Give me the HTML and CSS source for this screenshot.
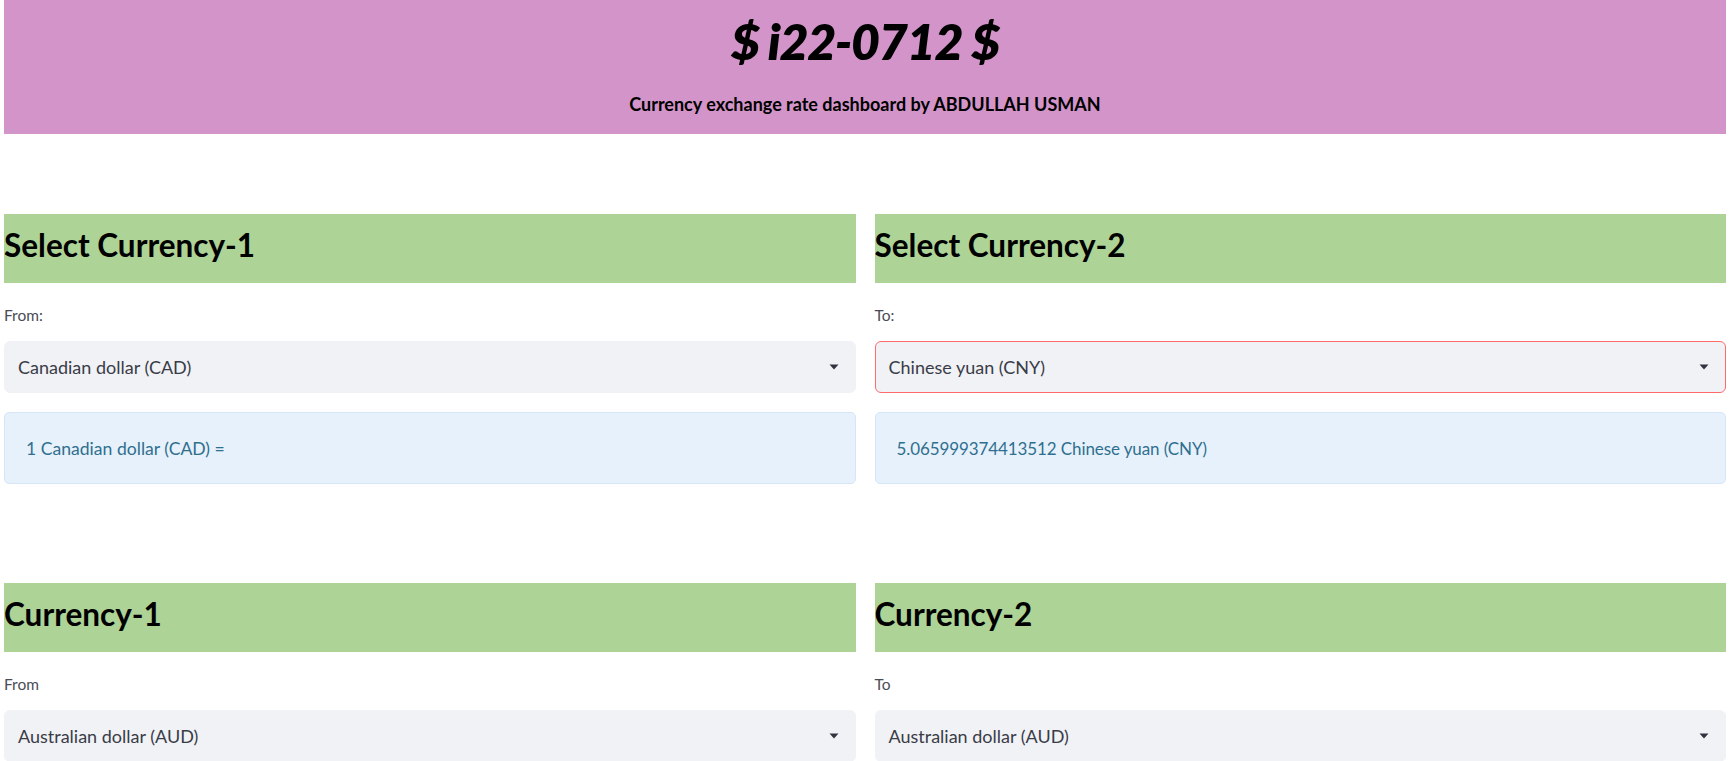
FILE: index.html
```html
<!DOCTYPE html>
<html lang="en">
<head>
<meta charset="utf-8">
<title>Currency exchange rate dashboard</title>
<link rel="stylesheet" href="styles.css">
</head>
<body>
<div class="page">
  <header class="banner">
    <h1 class="title">$ i22-0712 $</h1>
    <p class="subtitle">Currency exchange rate dashboard by ABDULLAH USMAN</p>
  </header>

  <section class="row">
    <div class="col">
      <h2 class="section-head">Select Currency-1</h2>
      <div class="label">From:</div>
      <div class="select">
        <span class="select-value">Canadian dollar (CAD)</span>
        <svg class="caret" width="10" height="6" viewBox="0 0 10 6"><polygon points="0.5,0.5 9.5,0.5 5,5.5" fill="#31333f"/></svg>
      </div>
      <div class="info">1 Canadian dollar (CAD) =</div>
    </div>
    <div class="col">
      <h2 class="section-head">Select Currency-2</h2>
      <div class="label">To:</div>
      <div class="select select-focus">
        <span class="select-value">Chinese yuan (CNY)</span>
        <svg class="caret" width="10" height="6" viewBox="0 0 10 6"><polygon points="0.5,0.5 9.5,0.5 5,5.5" fill="#31333f"/></svg>
      </div>
      <div class="info info-number">5.065999374413512 Chinese yuan (CNY)</div>
    </div>
  </section>

  <section class="row row-second">
    <div class="col">
      <h2 class="section-head">Currency-1</h2>
      <div class="label">From</div>
      <div class="select">
        <span class="select-value">Australian dollar (AUD)</span>
        <svg class="caret" width="10" height="6" viewBox="0 0 10 6"><polygon points="0.5,0.5 9.5,0.5 5,5.5" fill="#31333f"/></svg>
      </div>
    </div>
    <div class="col">
      <h2 class="section-head">Currency-2</h2>
      <div class="label">To</div>
      <div class="select">
        <span class="select-value">Australian dollar (AUD)</span>
        <svg class="caret" width="10" height="6" viewBox="0 0 10 6"><polygon points="0.5,0.5 9.5,0.5 5,5.5" fill="#31333f"/></svg>
      </div>
    </div>
  </section>
</div>
</body>
</html>
```

FILE: styles.css
```css
* { box-sizing: border-box; }

html, body {
  margin: 0;
  padding: 0;
  background: #ffffff;
}

body {
  font-family: Lato, "Open Sans", sans-serif;
  color: #31333f;
  overflow: hidden;
}

.page {
  padding: 0 8px 0 4px;
}

.banner {
  background: #d395c9;
  height: 134px;
  display: flex;
  flex-direction: column;
  align-items: center;
  padding-top: 16px;
}

.title {
  margin: 0;
  font-size: 50px;
  line-height: 50px;
  font-weight: 800;
  font-style: italic;
  letter-spacing: -1.2px;
  color: #000;
}

.subtitle {
  margin: 29px 0 0;
  font-size: 18px;
  line-height: 18px;
  font-weight: 700;
  color: #000;
}

.row {
  display: grid;
  grid-template-columns: 1fr 1fr;
  column-gap: 19px;
  margin-top: 80px;
}

.row-second {
  margin-top: 99px;
}

.col {
  display: flex;
  flex-direction: column;
  min-width: 0;
}

.section-head {
  margin: 0;
  background: #add396;
  height: 69px;
  line-height: 63px;
  padding: 0 0 6px 0;
  font-size: 31.5px;
  font-weight: 700;
  color: #000;
}

.label {
  margin-top: 22px;
  font-size: 15.5px;
  line-height: 20px;
  color: #4a4c55;
}

.select {
  margin-top: 16px;
  height: 52px;
  background: #f0f2f6;
  border: 1px solid #f0f2f6;
  border-radius: 6px;
  display: flex;
  align-items: center;
  justify-content: space-between;
  padding: 0 16px 0 13px;
}

.select-focus {
  border-color: #ff6a6a;
}

.select-value {
  font-size: 18px;
  color: #3a3c47;
}

.caret {
  display: block;
  flex: none;
}

.info {
  margin-top: 19px;
  height: 72px;
  background: #e7f1fc;
  border: 1px solid #d6e6f8;
  border-radius: 5px;
  display: flex;
  align-items: center;
  padding: 0 21px;
  font-size: 17.6px;
  color: #2f6f8f;
}

.info-number {
  font-size: 17px;
  letter-spacing: -0.1px;
}
```
